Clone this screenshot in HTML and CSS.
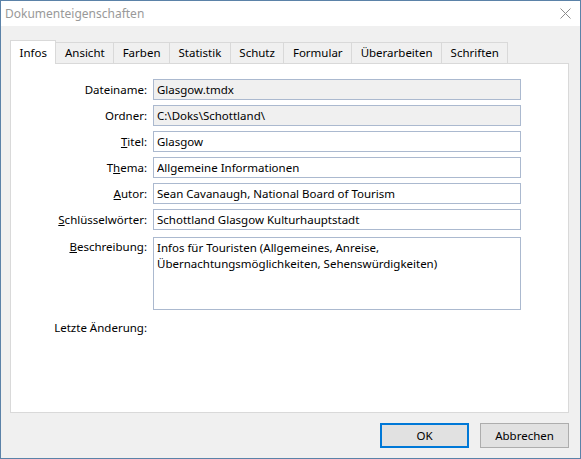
FILE: index.html
```html
<!DOCTYPE html>
<html lang="de">

<head>
    <meta charset="UTF-8">
    <title>Dokumenteigenschaften</title>
    <link rel="stylesheet" href="styles.css">
</head>

<body>
    <div class="window">
        <div class="titlebar">
            <span class="title">Dokumenteigenschaften</span>
            <svg class="close" width="11" height="11" viewBox="0 0 11 11">
                <path d="M0.5 0.5 L10.5 10.5 M10.5 0.5 L0.5 10.5" stroke="#8c8c8c" stroke-width="1" fill="none" />
            </svg>
        </div>

        <div class="content">
            <div class="tabs">
                <div class="tab active">Infos</div>
                <div class="tab">Ansicht</div>
                <div class="tab">Farben</div>
                <div class="tab">Statistik</div>
                <div class="tab">Schutz</div>
                <div class="tab">Formular</div>
                <div class="tab">Überarbeiten</div>
                <div class="tab">Schriften</div>
            </div>

            <div class="panel">
                <div class="form">
                    <label class="label" for="dateiname">Dateiname:</label>
                    <input class="field" type="text" id="dateiname" value="Glasgow.tmdx" readonly>

                    <label class="label" for="ordner">Ordner:</label>
                    <input class="field" type="text" id="ordner" value="C:\Doks\Schottland\" readonly>

                    <label class="label" for="titel"><u>T</u>itel:</label>
                    <input class="field" type="text" id="titel" value="Glasgow">

                    <label class="label" for="thema">T<u>h</u>ema:</label>
                    <input class="field" type="text" id="thema" value="Allgemeine Informationen">

                    <label class="label" for="autor"><u>A</u>utor:</label>
                    <input class="field" type="text" id="autor" value="Sean Cavanaugh, National Board of Tourism">

                    <label class="label" for="stichworte"><u>S</u>chlüsselwörter:</label>
                    <input class="field" type="text" id="stichworte" value="Schottland Glasgow Kulturhauptstadt">

                    <label class="label label-top" for="beschreibung"><u>B</u>eschreibung:</label>
                    <textarea class="field area" id="beschreibung">Infos für Touristen (Allgemeines, Anreise,
Übernachtungsmöglichkeiten, Sehenswürdigkeiten)</textarea>

                    <span class="label label-last">Letzte Änderung:</span>
                    <span></span>
                </div>
            </div>

            <div class="buttons">
                <button class="btn default">OK</button>
                <button class="btn">Abbrechen</button>
            </div>
        </div>
    </div>
</body>

</html>
```

FILE: styles.css
```css
body {
    margin: 0;
    font-family: "Noto Sans", sans-serif;
    font-size: 11.5px;
    color: #000;
}

.window {
    width: 581px;
    height: 459px;
    box-sizing: border-box;
    border: 1px solid #5b82a8;
    background-color: #f0f0f0;
}

.titlebar {
    height: 25px;
    background-color: #fff;
    display: flex;
    align-items: center;
    justify-content: space-between;
    padding: 0 9px 0 4px;
}

.title {
    color: #999;
    font-size: 12px;
}

.content {
    padding: 14px 11px 0 9px;
}

.tabs {
    display: flex;
    align-items: flex-end;
    height: 23px;
}

.tab {
    height: 21px;
    box-sizing: border-box;
    border: 1px solid #d9d9d9;
    border-bottom: none;
    margin-right: -1px;
    padding: 0 8.5px;
    display: flex;
    align-items: center;
    line-height: 16px;
}

.tab.active {
    height: 24px;
    margin-bottom: -1px;
    background-color: #fff;
    position: relative;
    z-index: 1;
}

.panel {
    height: 350px;
    box-sizing: border-box;
    border: 1px solid #d9d9d9;
    background-color: #fff;
    padding-top: 15px;
}

.form {
    display: grid;
    grid-template-columns: 136px 368px;
    column-gap: 6px;
    row-gap: 5px;
}

.label {
    text-align: right;
    align-self: center;
    line-height: 16px;
}

.label-top {
    align-self: start;
    padding-top: 4px;
}

.label-last {
    margin-top: 5px;
}

.field {
    height: 21px;
    box-sizing: border-box;
    border: 1px solid #abb9cf;
    padding: 0 3px;
    margin: 0;
    font-family: inherit;
    font-size: inherit;
    color: #000;
    background-color: #fff;
    outline: none;
}

.field[readonly] {
    background-color: #f0f0f0;
}

.area {
    height: 73px;
    margin-top: 2px;
    padding: 2px 3px;
    line-height: 16px;
    resize: none;
    overflow: hidden;
}

.buttons {
    display: flex;
    justify-content: flex-end;
    gap: 11px;
    margin-top: 10px;
}

.btn {
    width: 89px;
    height: 25px;
    box-sizing: border-box;
    border: 1px solid #adadad;
    background-color: #e1e1e1;
    font-family: inherit;
    font-size: inherit;
    color: #000;
    padding: 0;
}

.btn.default {
    border: 2px solid #0078d7;
}
```
